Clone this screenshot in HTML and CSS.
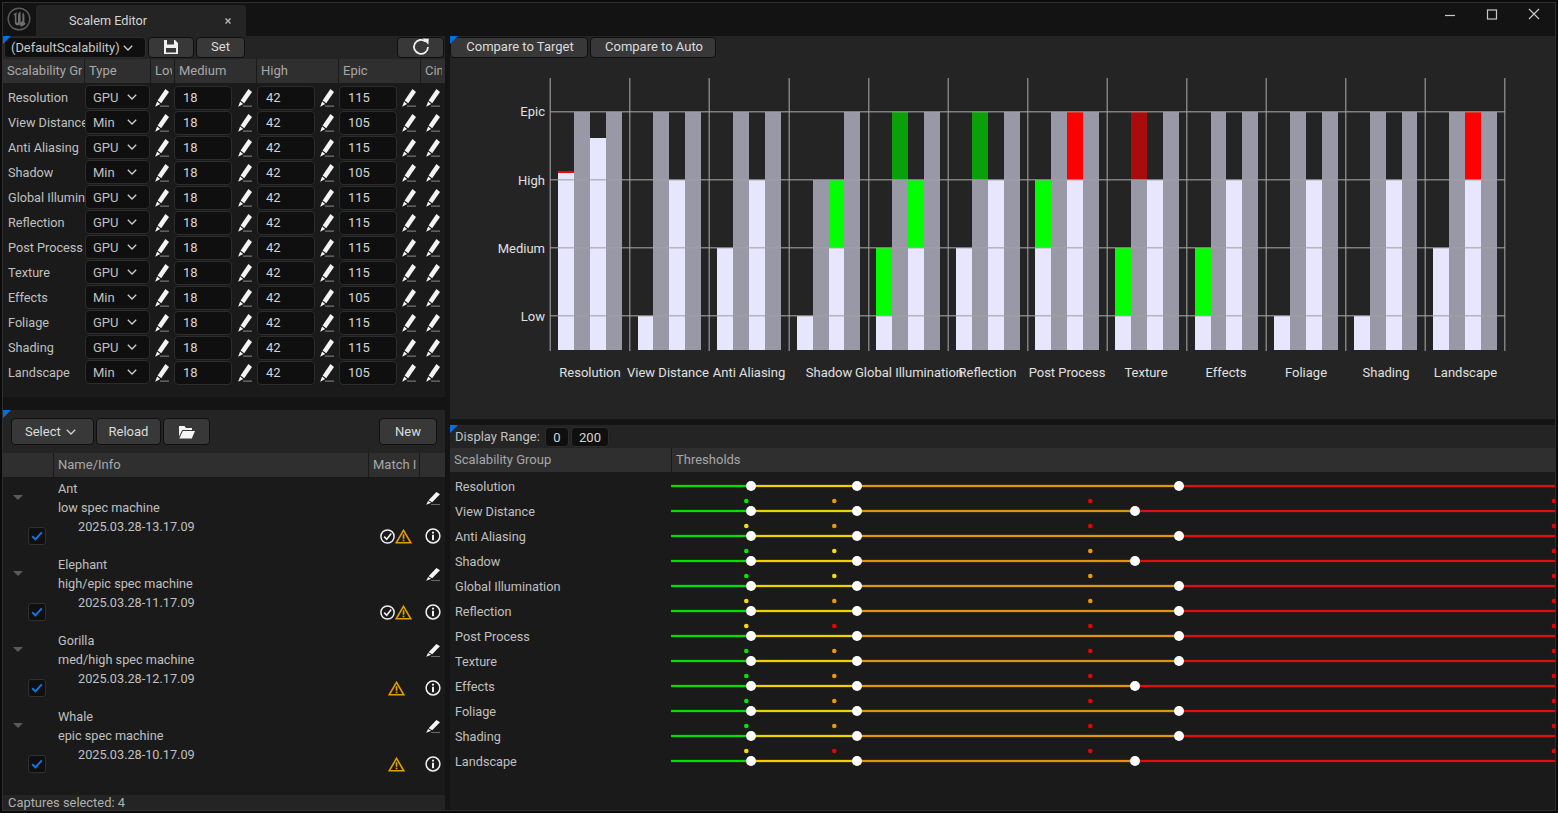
FILE: index.html
```html
<!DOCTYPE html>
<html>
  <head>
    <title>Scalem Editor</title>
    <link rel="stylesheet" href="styles.css">
  </head>
  <body>
    <svg class="icon-defs" width="0" height="0">
      <symbol id="pencil" viewBox="0 0 14 18" preserveAspectRatio="none">
        <path class="pencil-body" d="M10.4 0 L14 3 L6.2 14.2 L2.6 11.4 Z"/>
        <path class="pencil-body" d="M2.1 12.4 L5.2 14.9 L.2 17.8 Z"/>
        <rect class="pencil-line" x="5" y="16.6" width="9" height="1"/>
      </symbol>
      <symbol id="chevron" viewBox="0 0 10 6">
        <path class="chevron-stroke" d="M.8 .8 L5 5 L9.2 .8"/>
      </symbol>
      <symbol id="info" viewBox="0 0 16 16">
        <circle class="info-ring" cx="8" cy="8" r="6.9"/>
        <circle class="info-fill" cx="8" cy="4.7" r="1.1"/>
        <rect class="info-fill" x="7" y="6.8" width="2" height="5.4"/>
      </symbol>
      <symbol id="warning" viewBox="0 0 17 15">
        <path class="warning-ring" d="M8.5 1.4 L15.8 13.8 L1.2 13.8 Z"/>
        <rect class="warning-fill" x="7.7" y="5.2" width="1.7" height="4.6"/>
        <rect class="warning-fill" x="7.7" y="10.6" width="1.7" height="1.7"/>
      </symbol>
      <symbol id="matched" viewBox="0 0 15 15">
        <circle class="info-ring" cx="7.5" cy="7.5" r="6.6"/>
        <path class="matched-tick" d="M4.2 7.6 L6.7 10.2 L11.2 4.6"/>
      </symbol>
      <symbol id="tick" viewBox="0 0 12 10">
        <path class="tick-stroke" d="M1.2 5.2 L4.4 8.4 L10.8 1.4"/>
      </symbol>
      <symbol id="collapse" viewBox="0 0 10 5">
        <path class="collapse-fill" d="M0 0 H10 L5 5 Z"/>
      </symbol>
      <symbol id="line-long" viewBox="0 0 884 25">
        <rect class="th-green" x="0" y="11" width="80" height="2"/>
        <rect class="th-yellow" x="80" y="11" width="106" height="2"/>
        <rect class="th-orange" x="186" y="11" width="322" height="2"/>
        <rect class="th-red" x="508" y="11" width="376" height="2"/>
        <circle class="th-handle" cx="80" cy="12" r="5"/>
        <circle class="th-handle" cx="186" cy="12" r="5"/>
        <circle class="th-handle" cx="508" cy="12" r="5"/>
      </symbol>
      <symbol id="line-short" viewBox="0 0 884 25">
        <rect class="th-green" x="0" y="11" width="80" height="2"/>
        <rect class="th-yellow" x="80" y="11" width="106" height="2"/>
        <rect class="th-orange" x="186" y="11" width="278" height="2"/>
        <rect class="th-red" x="464" y="11" width="420" height="2"/>
        <circle class="th-handle" cx="80" cy="12" r="5"/>
        <circle class="th-handle" cx="186" cy="12" r="5"/>
        <circle class="th-handle" cx="464" cy="12" r="5"/>
      </symbol>
    </svg>

    <div class="window">
      <div class="titlebar">
        <svg class="logo" viewBox="0 0 24 24">
          <circle class="logo-ring" cx="12" cy="12" r="10.8"/>
          <path class="logo-mark" d="M6.5 7.5 C8 6 9.5 5.5 10.5 5.2 C9.6 6 9.4 6.6 9.4 8 V14.5 C9.4 15.6 10.2 15.9 11 15.4 V8 C11 6.6 12 5.4 14 4.6 C13.5 5.6 13.6 6.4 13.6 7.4 V15.6 L15.4 14 V8 C15.4 6.8 15.6 6 16.6 5.2 C16.4 6 16.6 7 17.4 8 V14.6 C17.4 16 18 16.6 19 16.6 C17.4 18.4 15.4 19.4 13.4 19.8 L13.2 17.4 C11 19 8 18.4 7.8 15.4 V9 C7.8 8.2 7.2 7.8 6.5 7.5 Z"/>
        </svg>
        <div class="tab">
          <span class="tab-label">Scalem Editor</span>
          <svg class="tab-close" viewBox="0 0 6 6"><path d="M.5 .5 L5.5 5.5 M5.5 .5 L.5 5.5"/></svg>
        </div>
        <div class="window-controls">
          <svg class="win-icon" viewBox="0 0 12 12"><path d="M1 7.5 H11"/></svg>
          <svg class="win-icon" viewBox="0 0 12 12"><rect x="1.5" y="2" width="9" height="9"/></svg>
          <svg class="win-icon" viewBox="0 0 12 12"><path d="M1 1 L11 11 M11 1 L1 11"/></svg>
        </div>
      </div>

      <div class="main">
        <div class="left">
          <section class="panel levels">
            <div class="toolbar">
              <div class="combo profile-combo"><span>(DefaultScalability)</span><svg class="chevron"><use href="#chevron"/></svg></div>
              <button class="btn save-btn">
                <svg class="save-icon" viewBox="0 0 14 14"><path d="M0 0 H11 L14 3 V14 H0 Z M3 0 V4.5 H10 V0 Z M2 8 V12.6 H12 V8 Z" fill-rule="evenodd"/></svg>
              </button>
              <button class="btn set-btn">Set</button>
              <button class="btn refresh-btn">
                <svg class="refresh-icon" viewBox="0 0 18 18"><path class="refresh-arc" d="M13.6 3.6 A7 7 0 1 0 16 9"/><path class="refresh-head" d="M10.5 .6 L16.8 .8 L16.4 6.8 Z"/></svg>
              </button>
            </div>
            <div class="level-head">
              <div class="head-cell">Scalability Group</div>
              <div class="head-cell">Type</div>
              <div class="head-cell">Low</div>
              <div class="head-cell">Medium</div>
              <div class="head-cell">High</div>
              <div class="head-cell">Epic</div>
              <div class="head-cell">Cinematic</div>
            </div>
            <div class="level-body">
              <div class="level-row"><div class="name-cell">Resolution</div><div class="combo type-combo"><span>GPU</span><svg class="chevron"><use href="#chevron"/></svg></div><div class="pen-cell"><svg class="pen"><use href="#pencil"/></svg></div><div class="num-cell"><div class="num">18</div><svg class="pen"><use href="#pencil"/></svg></div><div class="num-cell"><div class="num">42</div><svg class="pen"><use href="#pencil"/></svg></div><div class="num-cell"><div class="num">115</div><svg class="pen"><use href="#pencil"/></svg></div><div class="pen-cell"><svg class="pen"><use href="#pencil"/></svg></div></div>
              <div class="level-row"><div class="name-cell">View Distance</div><div class="combo type-combo"><span>Min</span><svg class="chevron"><use href="#chevron"/></svg></div><div class="pen-cell"><svg class="pen"><use href="#pencil"/></svg></div><div class="num-cell"><div class="num">18</div><svg class="pen"><use href="#pencil"/></svg></div><div class="num-cell"><div class="num">42</div><svg class="pen"><use href="#pencil"/></svg></div><div class="num-cell"><div class="num">105</div><svg class="pen"><use href="#pencil"/></svg></div><div class="pen-cell"><svg class="pen"><use href="#pencil"/></svg></div></div>
              <div class="level-row"><div class="name-cell">Anti Aliasing</div><div class="combo type-combo"><span>GPU</span><svg class="chevron"><use href="#chevron"/></svg></div><div class="pen-cell"><svg class="pen"><use href="#pencil"/></svg></div><div class="num-cell"><div class="num">18</div><svg class="pen"><use href="#pencil"/></svg></div><div class="num-cell"><div class="num">42</div><svg class="pen"><use href="#pencil"/></svg></div><div class="num-cell"><div class="num">115</div><svg class="pen"><use href="#pencil"/></svg></div><div class="pen-cell"><svg class="pen"><use href="#pencil"/></svg></div></div>
              <div class="level-row"><div class="name-cell">Shadow</div><div class="combo type-combo"><span>Min</span><svg class="chevron"><use href="#chevron"/></svg></div><div class="pen-cell"><svg class="pen"><use href="#pencil"/></svg></div><div class="num-cell"><div class="num">18</div><svg class="pen"><use href="#pencil"/></svg></div><div class="num-cell"><div class="num">42</div><svg class="pen"><use href="#pencil"/></svg></div><div class="num-cell"><div class="num">105</div><svg class="pen"><use href="#pencil"/></svg></div><div class="pen-cell"><svg class="pen"><use href="#pencil"/></svg></div></div>
              <div class="level-row"><div class="name-cell">Global Illumination</div><div class="combo type-combo"><span>GPU</span><svg class="chevron"><use href="#chevron"/></svg></div><div class="pen-cell"><svg class="pen"><use href="#pencil"/></svg></div><div class="num-cell"><div class="num">18</div><svg class="pen"><use href="#pencil"/></svg></div><div class="num-cell"><div class="num">42</div><svg class="pen"><use href="#pencil"/></svg></div><div class="num-cell"><div class="num">115</div><svg class="pen"><use href="#pencil"/></svg></div><div class="pen-cell"><svg class="pen"><use href="#pencil"/></svg></div></div>
              <div class="level-row"><div class="name-cell">Reflection</div><div class="combo type-combo"><span>GPU</span><svg class="chevron"><use href="#chevron"/></svg></div><div class="pen-cell"><svg class="pen"><use href="#pencil"/></svg></div><div class="num-cell"><div class="num">18</div><svg class="pen"><use href="#pencil"/></svg></div><div class="num-cell"><div class="num">42</div><svg class="pen"><use href="#pencil"/></svg></div><div class="num-cell"><div class="num">115</div><svg class="pen"><use href="#pencil"/></svg></div><div class="pen-cell"><svg class="pen"><use href="#pencil"/></svg></div></div>
              <div class="level-row"><div class="name-cell">Post Process</div><div class="combo type-combo"><span>GPU</span><svg class="chevron"><use href="#chevron"/></svg></div><div class="pen-cell"><svg class="pen"><use href="#pencil"/></svg></div><div class="num-cell"><div class="num">18</div><svg class="pen"><use href="#pencil"/></svg></div><div class="num-cell"><div class="num">42</div><svg class="pen"><use href="#pencil"/></svg></div><div class="num-cell"><div class="num">115</div><svg class="pen"><use href="#pencil"/></svg></div><div class="pen-cell"><svg class="pen"><use href="#pencil"/></svg></div></div>
              <div class="level-row"><div class="name-cell">Texture</div><div class="combo type-combo"><span>GPU</span><svg class="chevron"><use href="#chevron"/></svg></div><div class="pen-cell"><svg class="pen"><use href="#pencil"/></svg></div><div class="num-cell"><div class="num">18</div><svg class="pen"><use href="#pencil"/></svg></div><div class="num-cell"><div class="num">42</div><svg class="pen"><use href="#pencil"/></svg></div><div class="num-cell"><div class="num">115</div><svg class="pen"><use href="#pencil"/></svg></div><div class="pen-cell"><svg class="pen"><use href="#pencil"/></svg></div></div>
              <div class="level-row"><div class="name-cell">Effects</div><div class="combo type-combo"><span>Min</span><svg class="chevron"><use href="#chevron"/></svg></div><div class="pen-cell"><svg class="pen"><use href="#pencil"/></svg></div><div class="num-cell"><div class="num">18</div><svg class="pen"><use href="#pencil"/></svg></div><div class="num-cell"><div class="num">42</div><svg class="pen"><use href="#pencil"/></svg></div><div class="num-cell"><div class="num">105</div><svg class="pen"><use href="#pencil"/></svg></div><div class="pen-cell"><svg class="pen"><use href="#pencil"/></svg></div></div>
              <div class="level-row"><div class="name-cell">Foliage</div><div class="combo type-combo"><span>GPU</span><svg class="chevron"><use href="#chevron"/></svg></div><div class="pen-cell"><svg class="pen"><use href="#pencil"/></svg></div><div class="num-cell"><div class="num">18</div><svg class="pen"><use href="#pencil"/></svg></div><div class="num-cell"><div class="num">42</div><svg class="pen"><use href="#pencil"/></svg></div><div class="num-cell"><div class="num">115</div><svg class="pen"><use href="#pencil"/></svg></div><div class="pen-cell"><svg class="pen"><use href="#pencil"/></svg></div></div>
              <div class="level-row"><div class="name-cell">Shading</div><div class="combo type-combo"><span>GPU</span><svg class="chevron"><use href="#chevron"/></svg></div><div class="pen-cell"><svg class="pen"><use href="#pencil"/></svg></div><div class="num-cell"><div class="num">18</div><svg class="pen"><use href="#pencil"/></svg></div><div class="num-cell"><div class="num">42</div><svg class="pen"><use href="#pencil"/></svg></div><div class="num-cell"><div class="num">115</div><svg class="pen"><use href="#pencil"/></svg></div><div class="pen-cell"><svg class="pen"><use href="#pencil"/></svg></div></div>
              <div class="level-row"><div class="name-cell">Landscape</div><div class="combo type-combo"><span>Min</span><svg class="chevron"><use href="#chevron"/></svg></div><div class="pen-cell"><svg class="pen"><use href="#pencil"/></svg></div><div class="num-cell"><div class="num">18</div><svg class="pen"><use href="#pencil"/></svg></div><div class="num-cell"><div class="num">42</div><svg class="pen"><use href="#pencil"/></svg></div><div class="num-cell"><div class="num">105</div><svg class="pen"><use href="#pencil"/></svg></div><div class="pen-cell"><svg class="pen"><use href="#pencil"/></svg></div></div>
            </div>
          </section>

          <section class="panel captures">
            <div class="capture-toolbar">
              <button class="btn select-btn">Select<svg class="chevron"><use href="#chevron"/></svg></button>
              <button class="btn reload-btn">Reload</button>
              <button class="btn folder-btn">
                <svg class="folder-icon" viewBox="0 0 16 14"><path d="M0 1 H5.5 L7 3 H13 V5 H3.2 L0 11.5 Z M3.8 6 H16 L12.8 13.4 H.4 Z"/></svg>
              </button>
              <button class="btn new-btn">New</button>
            </div>
            <div class="capture-head">
              <div class="head-cell"></div>
              <div class="head-cell">Name/Info</div>
              <div class="head-cell">Match Info</div>
              <div class="head-cell"></div>
            </div>
            <div class="capture-list">
              <div class="capture">
                <div class="capture-left"><svg class="collapse"><use href="#collapse"/></svg><div class="check"><svg class="tick"><use href="#tick"/></svg></div></div>
                <div class="capture-info"><div class="info-line">Ant</div><div class="info-line">low spec machine</div><div class="info-line info-date">2025.03.28-13.17.09</div></div>
                <div class="capture-right">
                  <svg class="pen pen-small"><use href="#pencil"/></svg>
                  <div class="capture-status"><div class="status-icons"><svg class="matched"><use href="#matched"/></svg><svg class="warning"><use href="#warning"/></svg></div><svg class="info"><use href="#info"/></svg></div>
                </div>
              </div>
              <div class="capture">
                <div class="capture-left"><svg class="collapse"><use href="#collapse"/></svg><div class="check"><svg class="tick"><use href="#tick"/></svg></div></div>
                <div class="capture-info"><div class="info-line">Elephant</div><div class="info-line">high/epic spec machine</div><div class="info-line info-date">2025.03.28-11.17.09</div></div>
                <div class="capture-right">
                  <svg class="pen pen-small"><use href="#pencil"/></svg>
                  <div class="capture-status"><div class="status-icons"><svg class="matched"><use href="#matched"/></svg><svg class="warning"><use href="#warning"/></svg></div><svg class="info"><use href="#info"/></svg></div>
                </div>
              </div>
              <div class="capture">
                <div class="capture-left"><svg class="collapse"><use href="#collapse"/></svg><div class="check"><svg class="tick"><use href="#tick"/></svg></div></div>
                <div class="capture-info"><div class="info-line">Gorilla</div><div class="info-line">med/high spec machine</div><div class="info-line info-date">2025.03.28-12.17.09</div></div>
                <div class="capture-right">
                  <svg class="pen pen-small"><use href="#pencil"/></svg>
                  <div class="capture-status"><div class="status-icons"><svg class="warning"><use href="#warning"/></svg></div><svg class="info"><use href="#info"/></svg></div>
                </div>
              </div>
              <div class="capture">
                <div class="capture-left"><svg class="collapse"><use href="#collapse"/></svg><div class="check"><svg class="tick"><use href="#tick"/></svg></div></div>
                <div class="capture-info"><div class="info-line">Whale</div><div class="info-line">epic spec machine</div><div class="info-line info-date">2025.03.28-10.17.09</div></div>
                <div class="capture-right">
                  <svg class="pen pen-small"><use href="#pencil"/></svg>
                  <div class="capture-status"><div class="status-icons"><svg class="warning"><use href="#warning"/></svg></div><svg class="info"><use href="#info"/></svg></div>
                </div>
              </div>
            </div>
            <div class="statusbar">Captures selected: 4</div>
          </section>
        </div>

        <div class="right">
          <section class="panel chart-panel">
            <div class="toolbar">
              <button class="btn compare-target">Compare to Target</button>
              <button class="btn compare-auto">Compare to Auto</button>
            </div>
            <svg class="chart" viewBox="450 59 1105 360">
              <g transform="translate(558 0)">
                <rect class="bar-white" x="0" y="173" width="16" height="177"/><rect class="bar-red" x="0" y="171" width="16" height="2"/>
                <rect class="bar-gray" x="16" y="112" width="16" height="238"/>
                <rect class="bar-white" x="32" y="138" width="16" height="212"/>
                <rect class="bar-gray" x="48" y="112" width="16" height="238"/>
              </g>
              <g transform="translate(638 0)">
                <rect class="bar-white" x="0" y="316" width="16" height="34"/>
                <rect class="bar-gray" x="15" y="112" width="16" height="238"/>
                <rect class="bar-white" x="31" y="180" width="16" height="170"/>
                <rect class="bar-gray" x="47" y="112" width="16" height="238"/>
              </g>
              <g transform="translate(717 0)">
                <rect class="bar-white" x="0" y="248" width="16" height="102"/>
                <rect class="bar-gray" x="16" y="112" width="16" height="238"/>
                <rect class="bar-white" x="32" y="180" width="16" height="170"/>
                <rect class="bar-gray" x="48" y="112" width="16" height="238"/>
              </g>
              <g transform="translate(797 0)">
                <rect class="bar-white" x="0" y="316" width="16" height="34"/>
                <rect class="bar-gray" x="16" y="180" width="16" height="170"/>
                <rect class="bar-white" x="32" y="248" width="16" height="102"/><rect class="bar-green" x="32" y="180" width="16" height="68"/>
                <rect class="bar-gray" x="47" y="112" width="16" height="238"/>
              </g>
              <g transform="translate(876 0)">
                <rect class="bar-white" x="0" y="316" width="16" height="34"/><rect class="bar-green" x="0" y="248" width="16" height="68"/>
                <rect class="bar-gray" x="16" y="180" width="16" height="170"/><rect class="bar-dkgreen" x="16" y="112" width="16" height="68"/>
                <rect class="bar-white" x="32" y="248" width="16" height="102"/><rect class="bar-green" x="32" y="180" width="16" height="68"/>
                <rect class="bar-gray" x="48" y="112" width="16" height="238"/>
              </g>
              <g transform="translate(956 0)">
                <rect class="bar-white" x="0" y="248" width="16" height="102"/>
                <rect class="bar-gray" x="16" y="180" width="16" height="170"/><rect class="bar-dkgreen" x="16" y="112" width="16" height="68"/>
                <rect class="bar-white" x="32" y="180" width="16" height="170"/>
                <rect class="bar-gray" x="48" y="112" width="16" height="238"/>
              </g>
              <g transform="translate(1035 0)">
                <rect class="bar-white" x="0" y="248" width="16" height="102"/><rect class="bar-green" x="0" y="180" width="16" height="68"/>
                <rect class="bar-gray" x="16" y="112" width="16" height="238"/>
                <rect class="bar-white" x="32" y="180" width="16" height="170"/><rect class="bar-red" x="32" y="112" width="16" height="68"/>
                <rect class="bar-gray" x="48" y="112" width="16" height="238"/>
              </g>
              <g transform="translate(1115 0)">
                <rect class="bar-white" x="0" y="316" width="16" height="34"/><rect class="bar-green" x="0" y="248" width="16" height="68"/>
                <rect class="bar-gray" x="16" y="180" width="16" height="170"/><rect class="bar-dkred" x="16" y="112" width="16" height="68"/>
                <rect class="bar-white" x="32" y="180" width="16" height="170"/>
                <rect class="bar-gray" x="48" y="112" width="16" height="238"/>
              </g>
              <g transform="translate(1195 0)">
                <rect class="bar-white" x="0" y="316" width="16" height="34"/><rect class="bar-green" x="0" y="248" width="16" height="68"/>
                <rect class="bar-gray" x="16" y="112" width="15" height="238"/>
                <rect class="bar-white" x="31" y="180" width="16" height="170"/>
                <rect class="bar-gray" x="47" y="112" width="16" height="238"/>
              </g>
              <g transform="translate(1274 0)">
                <rect class="bar-white" x="0" y="316" width="16" height="34"/>
                <rect class="bar-gray" x="16" y="112" width="16" height="238"/>
                <rect class="bar-white" x="32" y="180" width="16" height="170"/>
                <rect class="bar-gray" x="48" y="112" width="16" height="238"/>
              </g>
              <g transform="translate(1354 0)">
                <rect class="bar-white" x="0" y="316" width="16" height="34"/>
                <rect class="bar-gray" x="16" y="112" width="16" height="238"/>
                <rect class="bar-white" x="32" y="180" width="16" height="170"/>
                <rect class="bar-gray" x="48" y="112" width="15" height="238"/>
              </g>
              <g transform="translate(1433 0)">
                <rect class="bar-white" x="0" y="248" width="16" height="102"/>
                <rect class="bar-gray" x="16" y="112" width="16" height="238"/>
                <rect class="bar-white" x="32" y="180" width="16" height="170"/><rect class="bar-red" x="32" y="112" width="16" height="68"/>
                <rect class="bar-gray" x="48" y="112" width="16" height="238"/>
              </g>

              <rect class="grid" x="549.5" y="78" width="1.5" height="273"/>
              <rect class="grid" x="629" y="78" width="1.5" height="273"/>
              <rect class="grid" x="708.5" y="78" width="1.5" height="273"/>
              <rect class="grid" x="788.5" y="78" width="1.5" height="273"/>
              <rect class="grid" x="868" y="78" width="1.5" height="273"/>
              <rect class="grid" x="947.5" y="78" width="1.5" height="273"/>
              <rect class="grid" x="1027" y="78" width="1.5" height="273"/>
              <rect class="grid" x="1106.5" y="78" width="1.5" height="273"/>
              <rect class="grid" x="1186" y="78" width="1.5" height="273"/>
              <rect class="grid" x="1265.5" y="78" width="1.5" height="273"/>
              <rect class="grid" x="1345" y="78" width="1.5" height="273"/>
              <rect class="grid" x="1424.5" y="78" width="1.5" height="273"/>
              <rect class="grid" x="1504" y="78" width="1.5" height="273"/>
              <rect class="grid" x="550" y="111" width="955" height="1.5"/>
              <rect class="grid" x="550" y="179" width="955" height="1.5"/>
              <rect class="grid" x="550" y="247" width="955" height="1.5"/>
              <rect class="grid" x="550" y="315" width="955" height="1.5"/>

              <text class="axis-label" x="545" y="116">Epic</text>
              <text class="axis-label" x="545" y="185">High</text>
              <text class="axis-label" x="545" y="253">Medium</text>
              <text class="axis-label" x="545" y="321">Low</text>

              <text class="group-label" x="590" y="377">Resolution</text>
              <text class="group-label" x="668" y="377">View Distance</text>
              <text class="group-label" x="749" y="377">Anti Aliasing</text>
              <text class="group-label" x="829" y="377">Shadow</text>
              <text class="group-label" x="909" y="377">Global Illumination</text>
              <text class="group-label" x="987.5" y="377">Reflection</text>
              <text class="group-label" x="1067" y="377">Post Process</text>
              <text class="group-label" x="1146" y="377">Texture</text>
              <text class="group-label" x="1226" y="377">Effects</text>
              <text class="group-label" x="1306" y="377">Foliage</text>
              <text class="group-label" x="1386" y="377">Shading</text>
              <text class="group-label" x="1465.5" y="377">Landscape</text>
            </svg>
          </section>

          <section class="panel thresholds">
            <div class="range-bar">
              <span class="range-label">Display Range:</span>
              <div class="num range-min">0</div>
              <div class="num range-max">200</div>
            </div>
            <div class="threshold-head">
              <div class="head-cell">Scalability Group</div>
              <div class="head-cell">Thresholds</div>
            </div>
            <div class="threshold-body">
              <div class="threshold-row"><div class="threshold-name">Resolution</div><svg class="threshold-line" viewBox="0 0 884 25"><use href="#line-long"/></svg></div>
              <div class="threshold-row"><div class="threshold-name">View Distance</div><svg class="threshold-line" viewBox="0 0 884 25"><circle class="dot-green" cx="75.3" cy="2" r="2.3"/><circle class="dot-orange" cx="163.3" cy="2" r="2.3"/><circle class="dot-red" cx="419.3" cy="2" r="2.3"/><circle class="dot-red" cx="883" cy="2" r="2.3"/><use href="#line-short"/></svg></div>
              <div class="threshold-row"><div class="threshold-name">Anti Aliasing</div><svg class="threshold-line" viewBox="0 0 884 25"><circle class="dot-yellow" cx="75.3" cy="2" r="2.3"/><circle class="dot-orange" cx="163.3" cy="2" r="2.3"/><circle class="dot-red" cx="419.3" cy="2" r="2.3"/><circle class="dot-red" cx="883" cy="2" r="2.3"/><use href="#line-long"/></svg></div>
              <div class="threshold-row"><div class="threshold-name">Shadow</div><svg class="threshold-line" viewBox="0 0 884 25"><circle class="dot-green" cx="75.3" cy="2" r="2.3"/><circle class="dot-yellow" cx="163.3" cy="2" r="2.3"/><circle class="dot-orange" cx="419.3" cy="2" r="2.3"/><circle class="dot-red" cx="883" cy="2" r="2.3"/><use href="#line-short"/></svg></div>
              <div class="threshold-row"><div class="threshold-name">Global Illumination</div><svg class="threshold-line" viewBox="0 0 884 25"><circle class="dot-green" cx="75.3" cy="2" r="2.3"/><circle class="dot-yellow" cx="163.3" cy="2" r="2.3"/><circle class="dot-orange" cx="419.3" cy="2" r="2.3"/><circle class="dot-red" cx="883" cy="2" r="2.3"/><use href="#line-long"/></svg></div>
              <div class="threshold-row"><div class="threshold-name">Reflection</div><svg class="threshold-line" viewBox="0 0 884 25"><circle class="dot-yellow" cx="75.3" cy="2" r="2.3"/><circle class="dot-orange" cx="163.3" cy="2" r="2.3"/><circle class="dot-orange" cx="419.3" cy="2" r="2.3"/><circle class="dot-red" cx="883" cy="2" r="2.3"/><use href="#line-long"/></svg></div>
              <div class="threshold-row"><div class="threshold-name">Post Process</div><svg class="threshold-line" viewBox="0 0 884 25"><circle class="dot-yellow" cx="75.3" cy="2" r="2.3"/><circle class="dot-red" cx="163.3" cy="2" r="2.3"/><circle class="dot-red" cx="419.3" cy="2" r="2.3"/><circle class="dot-red" cx="883" cy="2" r="2.3"/><use href="#line-long"/></svg></div>
              <div class="threshold-row"><div class="threshold-name">Texture</div><svg class="threshold-line" viewBox="0 0 884 25"><circle class="dot-green" cx="75.3" cy="2" r="2.3"/><circle class="dot-orange" cx="163.3" cy="2" r="2.3"/><circle class="dot-red" cx="419.3" cy="2" r="2.3"/><circle class="dot-red" cx="883" cy="2" r="2.3"/><use href="#line-long"/></svg></div>
              <div class="threshold-row"><div class="threshold-name">Effects</div><svg class="threshold-line" viewBox="0 0 884 25"><circle class="dot-green" cx="75.3" cy="2" r="2.3"/><circle class="dot-orange" cx="163.3" cy="2" r="2.3"/><circle class="dot-red" cx="419.3" cy="2" r="2.3"/><circle class="dot-red" cx="883" cy="2" r="2.3"/><use href="#line-short"/></svg></div>
              <div class="threshold-row"><div class="threshold-name">Foliage</div><svg class="threshold-line" viewBox="0 0 884 25"><circle class="dot-green" cx="75.3" cy="2" r="2.3"/><circle class="dot-orange" cx="163.3" cy="2" r="2.3"/><circle class="dot-red" cx="419.3" cy="2" r="2.3"/><circle class="dot-red" cx="883" cy="2" r="2.3"/><use href="#line-long"/></svg></div>
              <div class="threshold-row"><div class="threshold-name">Shading</div><svg class="threshold-line" viewBox="0 0 884 25"><circle class="dot-green" cx="75.3" cy="2" r="2.3"/><circle class="dot-orange" cx="163.3" cy="2" r="2.3"/><circle class="dot-red" cx="419.3" cy="2" r="2.3"/><circle class="dot-red" cx="883" cy="2" r="2.3"/><use href="#line-long"/></svg></div>
              <div class="threshold-row"><div class="threshold-name">Landscape</div><svg class="threshold-line" viewBox="0 0 884 25"><circle class="dot-yellow" cx="75.3" cy="2" r="2.3"/><circle class="dot-red" cx="163.3" cy="2" r="2.3"/><circle class="dot-red" cx="419.3" cy="2" r="2.3"/><circle class="dot-red" cx="883" cy="2" r="2.3"/><use href="#line-short"/></svg></div>
            </div>
          </section>
        </div>
      </div>
    </div>
  </body>
</html>
```

FILE: styles.css
```css
* {
  box-sizing: border-box;
}

html, body {
  height: 100%;
}

body {
  margin: 0;
  background-color: #0a0a0a;
  color: #c0c0c0;
  font-family: "Roboto", "Liberation Sans", sans-serif;
  font-size: 13px;
  overflow: hidden;
}

.icon-defs {
  display: block;
  height: 0;
}

svg {
  display: block;
  flex: none;
}

.window {
  width: 1554px;
  height: 809px;
  margin: 2px 0 0 2px;
  border: 1px solid #303030;
  background-color: #141414;
  display: flex;
  flex-direction: column;
  overflow: hidden;
}

/* title bar */
.titlebar {
  height: 33px;
  flex: none;
  display: flex;
  align-items: flex-end;
  background-color: #131313;
}

.logo {
  width: 24px;
  height: 24px;
  margin: 0 5px 5px 4px;
}

.logo-ring {
  fill: none;
  stroke: #5c5c5c;
  stroke-width: 1.4;
}

.logo-mark {
  fill: #6e6e6e;
}

.tab {
  width: 210px;
  height: 31px;
  padding: 0 15px 0 33px;
  display: flex;
  align-items: center;
  justify-content: space-between;
  background-color: #242424;
  border-radius: 4px 4px 0 0;
  color: #d4d4d4;
  font-size: 12.7px;
}

.tab-close {
  width: 6px;
  height: 6px;
  fill: none;
  stroke: #b8b8b8;
  stroke-width: 1.4;
}

.window-controls {
  margin-left: auto;
  height: 33px;
  padding: 5px 15px 0 0;
  display: flex;
  gap: 30px;
}

.win-icon {
  width: 12px;
  height: 12px;
  fill: none;
  stroke: #c8c8c8;
  stroke-width: 1.2;
}

/* main layout */
.main {
  flex: 1;
  display: flex;
  gap: 5px;
  min-height: 0;
}

.left {
  width: 442px;
  flex: none;
  display: flex;
  flex-direction: column;
  gap: 13px;
}

.right {
  flex: 1;
  display: flex;
  flex-direction: column;
  gap: 6px;
  min-width: 0;
}

.panel {
  position: relative;
  display: flex;
  flex-direction: column;
  background-color: #1a1a1a;
  overflow: hidden;
}

.panel::before {
  content: "";
  position: absolute;
  left: 0;
  top: 0;
  border-top: 8px solid #0070e0;
  border-right: 8px solid transparent;
}

.levels {
  height: 361px;
  flex: none;
}

.captures {
  flex: 1;
}

.chart-panel {
  height: 383px;
  flex: none;
  background-color: #242424;
}

.thresholds {
  flex: 1;
}

/* controls */
.toolbar {
  height: 23px;
  flex: none;
  padding-top: 1px;
  display: flex;
  gap: 2px;
  background-color: #242424;
}

.btn {
  height: 21px;
  padding: 0;
  display: flex;
  align-items: center;
  justify-content: center;
  background-color: #383838;
  border: 1px solid #0f0f0f;
  border-radius: 4px;
  color: #dcdcdc;
  font-family: inherit;
  font-size: 13px;
}

.toolbar .btn {
  padding-bottom: 2px;
}

.combo {
  display: flex;
  align-items: center;
  justify-content: space-between;
  background-color: #0f0f0f;
  border: 1px solid #2c2c2c;
  border-radius: 4px;
  overflow: hidden;
}

.chevron {
  width: 10px;
  height: 6px;
}

.chevron-stroke {
  fill: none;
  stroke: #d0d0d0;
  stroke-width: 1.3;
}

.profile-combo {
  width: 142px;
  height: 21px;
  margin-left: 1px;
  padding: 0 12px 0 6px;
  color: #c8c8c8;
  font-size: 12.9px;
}

.save-btn {
  width: 46px;
}

.save-icon {
  width: 14px;
  height: 14px;
  fill: #f0f0f0;
}

.set-btn {
  width: 49px;
}

.refresh-btn {
  width: 47px;
  margin-left: auto;
  margin-right: 1px;
}

.refresh-icon {
  width: 18px;
  height: 18px;
}

.refresh-arc {
  fill: none;
  stroke: #f0f0f0;
  stroke-width: 1.8;
}

.refresh-head {
  fill: #f0f0f0;
}

/* levels table */
.level-row {
  display: grid;
  grid-template-columns: 82px 65px 24px 83px 82px 82px 24px;
  height: 25px;
}

.level-head {
  display: grid;
  grid-template-columns: 81px 66px 24px 82px 82px 82px 24px;
  height: 24px;
  background-color: #2f2f2f;
  flex: none;
}

.level-body {
  padding-top: 2px;
  flex: 1;
}

.head-cell {
  display: flex;
  align-items: center;
  padding: 0 0 2px 4px;
  border-left: 1px solid #1a1a1a;
  border-right: 2px solid #2f2f2f;
  color: #a8a8a8;
  white-space: nowrap;
  overflow: hidden;
}

.level-head .head-cell:first-child {
  border-left: none;
}

.name-cell {
  display: flex;
  align-items: center;
  padding-left: 5px;
  white-space: nowrap;
  overflow: hidden;
  font-size: 12.7px;
}

.type-combo {
  height: 24px;
  padding: 0 12px 0 7px;
}

.pen-cell {
  display: flex;
  align-items: center;
  justify-content: center;
}

.num-cell {
  display: flex;
  align-items: center;
}

.num-cell .pen {
  margin-left: 5px;
}

.level-row .num-cell:nth-child(4) .pen {
  margin-left: 6px;
}

.num {
  width: 58px;
  height: 24px;
  flex: none;
  padding-left: 8px;
  display: flex;
  align-items: center;
  background-color: #0f0f0f;
  border: 1px solid #2c2c2c;
  border-radius: 4px;
  color: #d4d4d4;
}

.pen {
  width: 14px;
  height: 18px;
}

.pen-small {
  height: 13px;
}

.pencil-body {
  fill: #f4f4f4;
}

.pencil-line {
  fill: #8a8a8a;
}

/* captures */
.capture-toolbar {
  height: 43px;
  flex: none;
  padding: 8px 8px 0 8px;
  display: flex;
  gap: 2px;
  background-color: #242424;
}

.capture-toolbar .btn {
  height: 27px;
}

.select-btn {
  width: 83px;
  padding-left: 13px;
  gap: 5px;
  justify-content: flex-start;
}

.reload-btn {
  width: 65px;
}

.folder-btn {
  width: 47px;
}

.folder-icon {
  width: 16px;
  height: 14px;
  fill: #f4f4f4;
}

.new-btn {
  width: 58px;
  margin-left: auto;
}

.capture-head {
  height: 24px;
  flex: none;
  display: grid;
  grid-template-columns: 50px 315px 51px 26px;
  background-color: #2f2f2f;
}

.capture-head .head-cell:first-child {
  border-left: none;
}

.capture-list {
  flex: 1;
}

.capture {
  height: 76px;
  display: grid;
  grid-template-columns: 55px 1fr 76px;
}

.capture-left {
  padding: 18px 0 0 10px;
}

.collapse {
  width: 10px;
  height: 5px;
}

.collapse-fill {
  fill: #5a5a5a;
}

.check {
  width: 18px;
  height: 18px;
  margin: 27px 0 0 15px;
  display: flex;
  align-items: center;
  justify-content: center;
  background-color: #0f0f0f;
  border: 1px solid #303030;
  border-radius: 3px;
}

.tick {
  width: 12px;
  height: 10px;
}

.tick-stroke {
  fill: none;
  stroke: #0f78e6;
  stroke-width: 2;
}

.capture-info {
  padding-top: 2px;
  font-size: 12.7px;
}

.info-line {
  height: 19px;
  line-height: 19px;
  white-space: nowrap;
}

.info-date {
  padding-left: 20px;
}

.capture-right {
  padding: 15px 5px 0 0;
  display: flex;
  flex-direction: column;
  align-items: flex-end;
}

.capture-status {
  margin: 23px -1px 0 0;
  height: 16px;
  display: flex;
  align-items: center;
  gap: 13px;
}

.status-icons {
  width: 32px;
  display: flex;
  justify-content: center;
}

.matched {
  width: 15px;
  height: 15px;
}

.warning {
  width: 17px;
  height: 15px;
}

.info {
  width: 16px;
  height: 16px;
}

.info-ring {
  fill: none;
  stroke: #f0f0f0;
  stroke-width: 1.5;
}

.info-fill {
  fill: #f0f0f0;
}

.matched-tick {
  fill: none;
  stroke: #f0f0f0;
  stroke-width: 1.6;
}

.warning-ring {
  fill: none;
  stroke: #e0a000;
  stroke-width: 1.6;
}

.warning-fill {
  fill: #e0a000;
}

.statusbar {
  height: 15px;
  flex: none;
  padding-left: 5px;
  line-height: 15px;
  background-color: #242424;
  color: #b0b0b0;
  font-size: 12.9px;
}

/* chart */
.compare-target {
  width: 138px;
  padding-left: 2px;
}

.compare-auto {
  width: 126px;
  padding-left: 2px;
}

.chart {
  width: 1105px;
  height: 360px;
}

.bar-white {
  fill: #e6e6ff;
}

.bar-gray {
  fill: #9898a6;
}

.bar-green {
  fill: #00ff00;
}

.bar-dkgreen {
  fill: #0aa00a;
}

.bar-red {
  fill: #ff0000;
}

.bar-dkred {
  fill: #a80c0c;
}

.grid {
  fill: rgba(162, 162, 162, 0.72);
}

.axis-label {
  fill: #e0e0e0;
  font-size: 13px;
  text-anchor: end;
}

.group-label {
  fill: #e0e0e0;
  font-size: 13px;
  text-anchor: middle;
}

/* thresholds */
.range-bar {
  height: 23px;
  flex: none;
  padding: 2px 0 0 5px;
  display: flex;
  gap: 2px;
  background-color: #242424;
}

.range-label {
  width: 88px;
  line-height: 20px;
  color: #c0c0c0;
}

.range-bar .num {
  height: 20px;
  padding: 0;
  justify-content: center;
}

.range-min {
  width: 24px;
}

.range-max {
  width: 38px;
}

.threshold-head {
  height: 24px;
  flex: none;
  display: grid;
  grid-template-columns: 221px 1fr;
  background-color: #2f2f2f;
}

.threshold-head .head-cell:first-child {
  border-left: none;
}

.threshold-body {
  flex: 1;
  padding-top: 2px;
}

.threshold-row {
  height: 25px;
  display: flex;
}

.threshold-name {
  width: 221px;
  padding-left: 5px;
  line-height: 26px;
  white-space: nowrap;
  font-size: 12.7px;
}

.threshold-line {
  width: 884px;
  height: 25px;
  overflow: visible;
}

.th-green {
  fill: #00e000;
  stroke: #00e000;
}

.th-yellow {
  fill: #eed400;
  stroke: #eed400;
}

.th-orange {
  fill: #e09410;
  stroke: #e09410;
}

.th-red {
  fill: #e01010;
  stroke: #e01010;
}

.th-green, .th-yellow, .th-orange, .th-red {
  stroke-width: 0.6;
  stroke-opacity: 0.45;
}

.th-handle {
  fill: #ffffff;
}

.dot-green {
  fill: #00e800;
}

.dot-yellow {
  fill: #f8dc00;
}

.dot-orange {
  fill: #f09800;
}

.dot-red {
  fill: #f00000;
}
```
